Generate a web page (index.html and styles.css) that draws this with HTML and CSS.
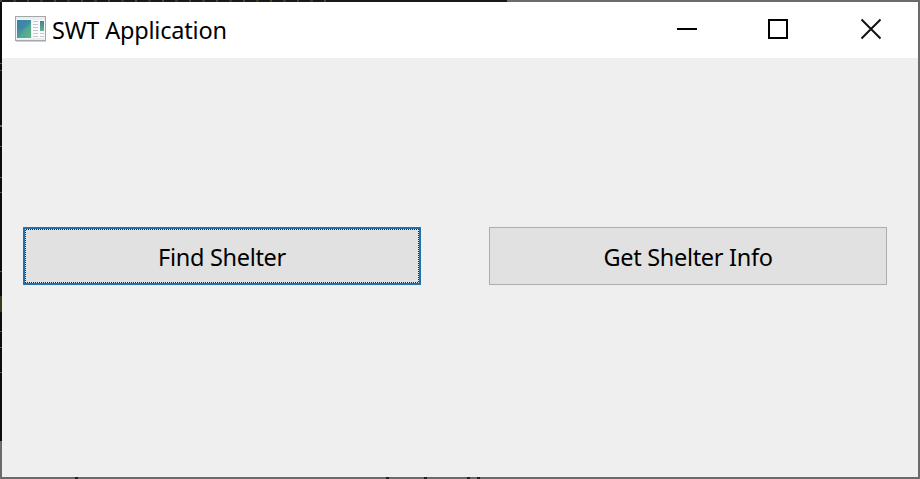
FILE: index.html
```html
<!DOCTYPE html>
<html lang="en">
<head>
<meta charset="utf-8">
<title>SWT Application</title>
<link rel="stylesheet" href="styles.css">
</head>
<body>
<div class="desktop">
  <main class="window">
    <header class="titlebar">
      <svg class="app-icon" width="32" height="26" viewBox="0 0 32 26">
        <defs>
          <linearGradient id="pane" x1="0" y1="0" x2="1" y2="1">
            <stop offset="0" stop-color="#3b83a5"/><stop offset=".45" stop-color="#4594a6"/><stop offset=".6" stop-color="#55a693"/><stop offset="1" stop-color="#5fb77f"/>
          </linearGradient>
          <linearGradient id="strip" x1="0" y1="0" x2="0" y2="1">
            <stop offset="0" stop-color="#417d9d"/><stop offset="1" stop-color="#66b28b"/>
          </linearGradient>
        </defs>
        <rect x=".5" y=".5" width="30" height="24" fill="#ebeef1" stroke="#a3a7ab"/>
        <path d="M1 25.3h30" stroke="#b8b8b8" stroke-width=".8"/>
        <rect x="1.5" y="3.5" width="15" height="19" fill="#f8fafb"/>
        <rect x="2" y="4" width="14" height="18" fill="url(#pane)"/>
        <path d="M2 14Q8 14 16 8V4H2z" fill="#347ba5" opacity=".35"/>
        <rect x="17" y="4" width="12.5" height="18" fill="#fafafa"/>
        <path d="M18 5.500h5M18 8.500h5M18 11.500h5M18 14.500h5M18 17.500h5M18 20.500h5M25 17.500h4M25 20.500h4" stroke="#c3c7cb"/>
        <rect x="25" y="5" width="4" height="10" fill="url(#strip)"/>
      </svg>
      <h1 class="title">SWT Application</h1>
      <svg class="controls" width="242" height="56" viewBox="676 2 242 56" fill="none" stroke="#000" stroke-width="2">
        <path d="M677 29h20"/>
        <rect x="769" y="20" width="18" height="18"/>
        <path d="M861.500 19.500l19 19M880.500 19.500l-19 19" stroke="#111"/>
      </svg>
    </header>
    <section class="content">
      <button class="button focused">Find Shelter</button>
      <button class="button">Get Shelter Info</button>
    </section>
  </main>
</div>
</body>
</html>
```
FILE: styles.css
```css
* { box-sizing: border-box; }
body {
  margin: 0;
  font-family: "Noto Sans", "Open Sans", sans-serif;
  color: #000;
}
.desktop {
  width: 920px;
  height: 479px;
  padding: 2px;
  background:
    linear-gradient(90deg, transparent 75px, #222 75px 78px, transparent 78px 386px, #222 386px 389px, transparent 389px 424px, #222 424px 427px, transparent 427px 467px, #222 467px 470px, transparent 470px 477px, #222 477px 480px, transparent 480px) 0 477px / 920px 2px no-repeat,
    repeating-linear-gradient(90deg, #47452a 0 2px, #1a1818 2px 13px, #383725 13px 16px, #1a1818 16px 27px) 0 0 / 328px 2px no-repeat,
    linear-gradient(#1a1818, #1a1818) 0 0 / 507px 2px no-repeat,
    linear-gradient(transparent 63px, #555 63px 64px, transparent 64px 70px, #444 70px 71px, transparent 71px 125px, #666 125px 127px, transparent 127px 146px, #555 146px 147px, transparent 147px 177px, #555 177px 178px, transparent 178px 192px, #555 192px 193px, transparent 193px 271px, #555 271px 272px, transparent 272px 296px, #38381c 296px 312px, transparent 312px 331px, #555 331px 332px, transparent 332px 347px, #555 347px 348px, transparent 348px 372px, #555 372px 373px, transparent 373px) 0 0 / 2px 441px no-repeat,
    linear-gradient(#0c0c0c, #0c0c0c) 0 0 / 2px 441px no-repeat,
    #6c6b6c;
}
.window {
  display: flex;
  flex-direction: column;
  width: 916px;
  height: 475px;
  background: #efefef;
}
.titlebar {
  display: flex;
  height: 56px;
  background: #fff;
}
.app-icon { margin: 14px 0 0 13px; }
.title {
  flex: 1;
  margin: 0 0 0 5px;
  font-size: 23.5px;
  font-weight: 400;
  line-height: 57px;
  letter-spacing: -0.2px;
  white-space: nowrap;
}
.content {
  display: flex;
  align-items: flex-start;
  gap: 68px;
  padding: 169px 31px 0 21px;
}
.button {
  width: 398px;
  height: 58px;
  padding: 1px 0 0;
  border: 1px solid #adadad;
  background: #e1e1e1;
  color: #000;
  font: 23.5px/50px "Noto Sans", "Open Sans", sans-serif;
  letter-spacing: -0.3px;
  white-space: nowrap;
}
.focused {
  padding: 2px 0 0;
  border: 2px solid #2470aa;
  background:
    linear-gradient(#e1e1e1, #e1e1e1) 1px 1px / 392px 52px no-repeat,
    repeating-conic-gradient(#0c2d55 0 25%, #dbe6ef 0 50%) 0 0 / 2px 2px;
}
```
